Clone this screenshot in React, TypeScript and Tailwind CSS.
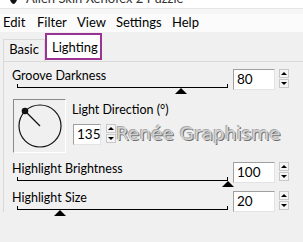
import React from "react";

const sliders = [
  { label: "Groove Darkness", value: "80", thumb: 163 },
  { label: "Highlight Brightness", value: "100", thumb: 210 },
  { label: "Highlight Size", value: "20", thumb: 42 },
];

const Spinner: React.FC<{ className?: string }> = ({ className = "" }) => (
  <div className={`flex h-[19px] w-[10px] flex-col ${className}`}>
    <div className="flex h-[9px] items-center justify-center border border-[#c8c8c8] bg-[#f4f4f4]">
      <div className="h-0 w-0 border-x-[3px] border-b-[3px] border-x-transparent border-b-black" />
    </div>
    <div className="mt-px flex h-[9px] items-center justify-center border border-[#c8c8c8] bg-[#f4f4f4]">
      <div className="h-0 w-0 border-x-[3px] border-t-[3px] border-x-transparent border-t-black" />
    </div>
  </div>
);

const NumberBox: React.FC<{ value: string; width: string }> = ({ value, width }) => (
  <div
    className={`${width} h-[21px] border border-t-[#a0a0a0] border-l-[#a0a0a0] border-b-[#e3e3e3] border-r-[#e3e3e3] bg-white pl-[3px] text-[13.5px] leading-[19px]`}
  >
    {value}
  </div>
);

const Slider: React.FC<{ label: string; value: string; thumb: number; className?: string }> = ({
  label,
  value,
  thumb,
  className = "",
}) => (
  <div className={`flex items-start ${className}`}>
    <div className="w-[216px]">
      <div className="h-[16px] leading-[16px]">{label}</div>
      <div className="relative ml-[5px] h-[4px] w-[211px] border-x border-b border-black">
        {/* thumb */}
        <div
          className="absolute top-[4px] h-0 w-0 -translate-x-1/2 border-x-[6px] border-b-[6px] border-x-transparent border-b-black"
          style={{ left: thumb }}
        />
      </div>
    </div>
    <div className="ml-[5px] mt-px">
      <NumberBox value={value} width="w-[42px]" />
    </div>
    <Spinner className="ml-[4px] mt-px" />
  </div>
);

export default function App() {
  return (
    <div className="h-[242px] w-[303px] overflow-hidden bg-[#f0f0f0] font-['Lato',sans-serif] text-[12.5px] text-black">
      {/* title bar, cut off at the top */}
      <div className="h-[8px] overflow-hidden bg-white">
        <div className="-mt-[10px] flex h-[16px] items-center pl-[8px]">
          <svg width="11" height="16" viewBox="0 0 11 16">
            <path d="M0 6 Q5.5 4 11 6 L8 12 Q5.5 16 3 12 Z" fill="#111" />
          </svg>
          <span className="ml-[7px] text-[13px] leading-[16px] text-[#333]">Alien Skin Xenofex 2 Puzzle</span>
        </div>
      </div>
      <div className="h-px bg-[#e6e6e6]" />
      <div className="h-[5px] bg-[#f6f6f6]" />

      {/* menu */}
      <div className="flex h-[18px] items-center bg-[#fbfbfb] pl-[3px] text-[13px]">
        <span className="w-[34px]">Edit</span>
        <span className="w-[40px]">Filter</span>
        <span className="w-[39px]">View</span>
        <span className="w-[56px]">Settings</span>
        <span>Help</span>
      </div>

      {/* tabs */}
      <div className="flex h-[29px] items-end pl-[3px]">
        <div className="flex h-[22px] w-[42px] items-center justify-center border-x border-t border-[#d9d9d9] pb-[2px] text-[13px]">
          Basic
        </div>
        <div className="mb-px flex h-[27px] w-[57px] items-start border-2 border-[#9a3393] bg-white pl-[5px] pt-[3px] text-[13px]">
          Lighting
        </div>
      </div>

      {/* panel */}
      <div className="ml-[3px] flex flex-col border-l border-t border-[#d9d9d9] pl-[8px] pt-[6px]">
        <Slider {...sliders[0]} />

        <div className="mt-[9px] flex h-[54px] items-start">
          <div className="ml-px h-[54px] w-[53px] border border-b-white border-l-[#8a8a8a] border-r-white border-t-[#8a8a8a]">
            <svg width="51" height="52" viewBox="0 0 51 52">
              <circle cx="26" cy="26" r="21" fill="none" stroke="#111" strokeWidth="1.2" />
              <line x1="26" y1="26" x2="11" y2="11" stroke="#111" strokeWidth="1.2" />
              <circle cx="11" cy="11" r="3.3" fill="#111" />
            </svg>
          </div>
          <div className="ml-[6px] flex flex-col">
            <div className="mt-[3px] h-[16px] leading-[16px]">Light Direction (°)</div>
            <div className="mt-[6px] flex items-start">
              <div className="ml-px">
                <NumberBox value="135" width="w-[28px]" />
              </div>
              <Spinner className="ml-[5px]" />
              <span className="-mt-[3px] font-['DejaVu_Sans',sans-serif] text-[18.5px] leading-[26px] text-[#d2d2d2] [text-shadow:1px_1px_0_#6e6e6e,-1px_-1px_0_#a8a8a8]">
                Renée Graphisme
              </span>
            </div>
          </div>
        </div>

        <Slider {...sliders[1]} className="mt-[8px]" />
        <Slider {...sliders[2]} className="mt-[7px]" />
      </div>
    </div>
  );
}
